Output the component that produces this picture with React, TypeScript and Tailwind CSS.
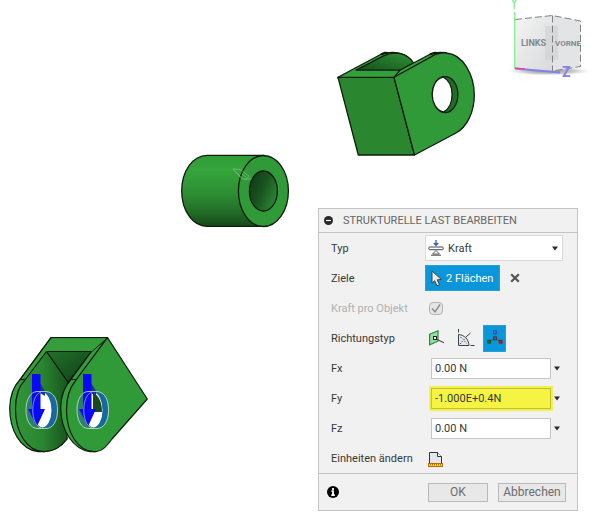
import { useState } from "react";
import type { ReactNode } from "react";

const Caret = () => (
  <svg width="6" height="5" viewBox="0 0 6 5" aria-hidden="true">
    <path d="M0 0.5H6L3 4.5Z" fill="#2b2b2b" />
  </svg>
);

const Row = ({
  label,
  htmlFor,
  muted,
  children
}: {
  label: string;
  htmlFor?: string;
  muted?: boolean;
  children: ReactNode;
}) => (
  <div className="flex h-[30px] items-center">
    <label
      htmlFor={htmlFor}
      className={
        muted
          ? "w-[94px] shrink-0 pt-0.5 text-[#b0b0b0]"
          : "w-[94px] shrink-0 pt-0.5"
      }
    >
      {label}
    </label>
    {children}
  </div>
);

const ForceField = ({
  id,
  label,
  initial,
  highlight
}: {
  id: string;
  label: string;
  initial: string;
  highlight?: boolean;
}) => {
  const [value, setValue] = useState(initial);

  return (
    <Row label={label} htmlFor={id}>
      <div className="flex flex-1 items-center gap-0.5 pl-[6px] pr-4">
        <input
          id={id}
          type="text"
          value={value}
          onChange={(e) => setValue(e.target.value)}
          className={
            highlight
              ? "h-[21px] w-0 flex-1 border border-[#c2bd3a] bg-[#f5f443] px-[3px] outline-2 outline-[#f3f04a]"
              : "h-[21px] w-0 flex-1 border border-[#c6c6c6] bg-white px-[3px] outline-none"
          }
        />
        <button type="button" aria-label={`${label} Optionen`} className="p-px">
          <Caret />
        </button>
      </div>
    </Row>
  );
};

const ForceIcon = () => (
  <svg width="16" height="16" viewBox="0 0 16 16" fill="none">
    <path d="M8 0V4.5M5.8 3L8 5.3L10.2 3" stroke="#3157b5" strokeWidth="1.3" />
    <rect x="0.8" y="7" width="14.4" height="2.7" rx="0.8" fill="#fff" stroke="#454950" />
    <path d="M8 10.5L4.6 14H11.4Z" fill="#fff" stroke="#454950" strokeWidth="0.9" />
    <path d="M3 15.2H13" stroke="#454950" />
  </svg>
);

const CursorIcon = () => (
  <svg width="12" height="17" viewBox="0 0 12 17">
    <path
      d="M1 1V13.2L3.7 10.7L6 15.8L8.5 14.7L6.2 9.8L10.4 9.5Z"
      fill="#e9edf0"
      stroke="#39424a"
      strokeWidth="1"
    />
  </svg>
);

const NormalIcon = () => (
  <svg width="18" height="16" viewBox="0 0 18 16">
    <path d="M1.6 4.3L10 0.8V11.2L1.6 14.8Z" fill="#98dda3" stroke="#288b3b" strokeWidth="1.2" />
    <path d="M7 8.4L16 12.8" stroke="#713d49" strokeWidth="1.1" />
    <rect x="5.5" y="6.5" width="3" height="3" fill="#fff" stroke="#222" />
  </svg>
);

const AngleIcon = () => (
  <svg width="18" height="18" viewBox="0 0 18 18" fill="none" stroke="#3c4147">
    <path d="M1.5 0V3.5M13.5 16.5H17.5" />
    <path d="M1.5 5.5C7.5 6 11.8 10.3 12 16.5H1.5Z" fill="#e3e7eb" />
    <path d="M9 8L13.5 4" />
    <path d="M3 15L8 9.5M3.5 8L6 10.5M7.5 12L9.5 14.5" strokeDasharray="1.4 1.3" strokeWidth="0.9" />
  </svg>
);

const VectorIcon = () => (
  <svg width="16" height="16" viewBox="0 0 16 16">
    <path d="M8 3V8" stroke="#2854a5" strokeDasharray="1.5 1" />
    <path d="M8 8.5L3 11" stroke="#29572d" strokeDasharray="2 0.8" />
    <path d="M8 8.5L13 11" stroke="#782a32" strokeDasharray="2 0.8" />
    <rect x="6.6" y="0.8" width="2.8" height="2.8" fill="#2586cf" stroke="#28539b" />
    <rect x="6.6" y="7" width="2.8" height="2.8" fill="#47728a" stroke="#44333b" />
    <rect x="0.8" y="10.3" width="2.8" height="2.8" fill="#137529" stroke="#125a22" />
    <rect x="12.2" y="10.3" width="2.8" height="2.8" fill="#bd1625" stroke="#941521" />
  </svg>
);

const UnitsIcon = () => (
  <svg width="16" height="17" viewBox="0 0 16 17">
    <path d="M1.5 12.5V1.5H9.5L13.5 5.5V12.5" fill="#e5e7ef" stroke="#30343a" />
    <path d="M9.5 1.5V5.5H13.5" fill="#fff" stroke="#30343a" />
    <rect x="0.5" y="12.5" width="14" height="3" fill="#ffe21c" stroke="#bb6b00" />
    <path d="M2.5 13V14.5M4.5 13V14.5M6.5 13V14.5M8.5 13V14.5M10.5 13V14.5M12.5 13V14.5" stroke="#b77300" />
  </svg>
);

const UpperClevis = () => (
  <svg
    className="absolute left-[330px] top-[45px]"
    width="150"
    height="115"
    viewBox="330 45 150 115"
    stroke="#101c10"
    strokeWidth="1.3"
    strokeLinejoin="round"
  >
    <defs>
      <linearGradient id="clevisInner" x1="0" y1="1" x2="1" y2="0">
        <stop offset="0" stopColor="#14501a" />
        <stop offset="1" stopColor="#2f9237" />
      </linearGradient>
    </defs>
    <path d="M338 77.3L381 54.2C393 50.5 406 52 413.5 63L400 78H338Z" fill="#34a03c" />
    <path d="M356 70.2L384 55.6C395 51 407 52.5 413.5 63L400 70.2Z" fill="url(#clevisInner)" />
    <path d="M381 54.2L385 52.7L388 53" fill="none" strokeWidth="2" />
    <path d="M394 77.3L400 70.2L430 54.2C436 51.6 441 52 446 52.7L433 57Z" fill="#36a43e" />
    <path d="M338 77.3H394L414.5 155H358.3Z" fill="#2b8630" />
    <path
      d="M394 77.3L431.5 56.6C436 53.5 441 52.8 446 53C463 54 474.3 75 474.3 95C474.3 112 467 127 456 133L414.5 155Z"
      fill="#309a38"
    />
    <path d="M430 54.2L435 52.7L439 53.2" fill="none" strokeWidth="2" />
    <ellipse cx="445.2" cy="94.6" rx="12.7" ry="18" fill="#1f6e27" />
    <path d="M443 77C429 80 428 108 443.5 112C455 106 455 83 443 77Z" fill="#fff" />
  </svg>
);

const Sleeve = () => (
  <svg
    className="absolute left-[176px] top-[150px]"
    width="118"
    height="82"
    viewBox="176 150 118 82"
    stroke="#101c10"
    strokeWidth="1.3"
  >
    <defs>
      <linearGradient id="sleeveBody" x1="0" y1="0" x2="0" y2="1">
        <stop offset="0" stopColor="#309b36" />
        <stop offset="0.2" stopColor="#35a53c" />
        <stop offset="0.55" stopColor="#2d8d33" />
        <stop offset="0.8" stopColor="#226c27" />
        <stop offset="1" stopColor="#15481a" />
      </linearGradient>
      <linearGradient id="sleeveBore" x1="0" y1="0.2" x2="1" y2="0.8">
        <stop offset="0" stopColor="#113916" />
        <stop offset="0.45" stopColor="#195421" />
        <stop offset="1" stopColor="#2f8a36" />
      </linearGradient>
    </defs>
    <path
      d="M263.5 155.4H207C193 155.4 181.7 171 181.7 191C181.7 211 193 226.4 207 226.4H263.5Z"
      fill="url(#sleeveBody)"
    />
    <ellipse cx="263.4" cy="191" rx="25" ry="35.5" fill="#309a38" />
    <ellipse cx="263.4" cy="191" rx="14" ry="20" fill="url(#sleeveBore)" />
    <g fill="none" stroke="#a9d9ac" strokeWidth="1" opacity="0.45">
      <path d="M233 169L240 169.5L249 176L246 180L240 177Z" />
      <path d="M236 172L243 179L252 179M242 174L246 177" />
    </g>
  </svg>
);

// Bore with the load arrow that acts on its face
const LoadedHole = () => (
  <>
    <path d="M37 392H46C54 392 57 400 57 410C57 421 53 428 46 428H37C30 428 26.5 420 26.5 410C26.5 400 30 392 37 392Z" fill="#2b806b" stroke="none" />
    <path d="M44 392C54 391 57 400 57 410C57 421 53 428 44 428Z" fill="#1668a0" stroke="none" />
    <ellipse cx="42.5" cy="410" rx="9" ry="17.5" fill="#fff" stroke="none" />
  </>
);

const LoadArrow = () => (
  <>
    <path d="M40 383L45 391V396L40 393Z" fill="#1b348e" stroke="none" />
    <path d="M32 374H40.5V409H45L37 426.5L28 409H32Z" fill="#0908fa" stroke="none" />
    <g fill="none" stroke="#c7e3d8" strokeWidth="1">
      <path d="M37 391.5H46C54 392 57.5 400 57.5 410C57.5 421 53 428.5 46 428.5H37C30 428 26 420 26 410C26 400 30 392 37 391.5Z" opacity="0.8" />
      <path d="M41 392C30 395 30 425 41 428" opacity="0.6" />
    </g>
  </>
);

const LowerClevis = () => (
  <svg
    className="absolute left-[4px] top-[332px]"
    width="150"
    height="125"
    viewBox="4 332 150 125"
    stroke="#101c10"
    strokeWidth="1.2"
    strokeLinejoin="round"
  >
    <defs>
      <linearGradient id="lowerInner" x1="0" y1="0" x2="1" y2="0">
        <stop offset="0" stopColor="#309638" />
        <stop offset="0.5" stopColor="#2a8631" />
        <stop offset="1" stopColor="#17551e" />
      </linearGradient>
      <linearGradient id="lowerPocket" x1="0" y1="0" x2="1" y2="1">
        <stop offset="0" stopColor="#237029" />
        <stop offset="1" stopColor="#10401a" />
      </linearGradient>
    </defs>
    <path
      d="M51 337.7H107.5L75 380C65 392 66 436 67 439C60 448 53 451.7 44 451.7H38C20 449 9.7 430 9.7 408C10 395 14 386 20 379.5Z"
      fill="#339e3b"
    />
    <path
      d="M46.5 351.5L68 382L67 439C61 447 53 451.7 44 451.7C27 451 15.5 433 15.5 409C15.5 396 19 386 25 380Z"
      fill="url(#lowerInner)"
    />
    <path d="M46.5 351.5H91.5L68 382Z" fill="url(#lowerPocket)" />
    <path d="M20 379.5H25" />
    <path
      d="M107.5 337.7L91.5 351.5L71 379.5C64 387 60.7 397 60.7 408C61 431 73 449 90 451.7H96L76 380Z"
      fill="#339e3b"
    />
    <path
      d="M107.5 337.7L147.3 399L112 439C106 447 102 451.7 94 451.7C78 451 66.5 433 66.5 410C66.5 397 70 387 76 380Z"
      fill="#309a38"
    />
    <path d="M51.6 338.4H106L91.5 351.5H46.5L41 351.5Z" fill="#339e3b" stroke="none" />
    <path d="M46.5 351.5H91.5M71 379.5H76M51 337.7L20 379.5" fill="none" />
    <LoadedHole />
    <LoadArrow />
    <g transform="translate(51 0)">
      <LoadedHole />
      <path d="M42 393C48 395 51 403 51 412H42Z" fill="#17481e" stroke="none" />
      <LoadArrow />
    </g>
  </svg>
);

const ViewCube = () => (
  <svg
    className="absolute right-0 top-0"
    width="95"
    height="85"
    viewBox="500 0 95 85"
  >
    <defs>
      <linearGradient id="cubeLeft" x1="0" y1="0" x2="1" y2="1">
        <stop offset="0" stopColor="#f4f4f4" />
        <stop offset="1" stopColor="#d9dadb" />
      </linearGradient>
      <radialGradient id="cubeShadow">
        <stop offset="0" stopColor="#8d8d8d" />
        <stop offset="0.6" stopColor="#cfcfcf" />
        <stop offset="1" stopColor="#fff" stopOpacity="0" />
      </radialGradient>
    </defs>
    <ellipse cx="549" cy="71" rx="45" ry="5" fill="url(#cubeShadow)" />
    <path d="M515 19.5L552.5 15.5V71L515 69Z" fill="url(#cubeLeft)" />
    <path d="M552.5 15.5L580.5 21V66.5L552.5 71Z" fill="#e3e4e5" />
    <path d="M545 26H558V60H545Z" fill="#cdd0d3" opacity="0.6" />
    <g fill="none" stroke="#818181" strokeDasharray="7 3">
      <path d="M515 19.5L552.5 15.5L580.5 21V66.5L552.5 71" />
      <path d="M552.5 15.5V71" />
    </g>
    <path d="M514.7 12V69" stroke="#8af394" strokeWidth="1.5" />
    <path d="M511.5 -2L514.3 3.5L517 -2M514.3 3.5V9" fill="none" stroke="#8af394" strokeWidth="1.5" />
    <path d="M515 68.5L560 72.5" stroke="#8282eb" strokeWidth="2" />
    <path d="M515 68.3L525 69" stroke="#d84ba0" strokeWidth="1.5" />
    <text x="521" y="46" fontSize="9" fontWeight="700" fill="#83888e">LINKS</text>
    <text x="555" y="46" fontSize="8" fontWeight="700" fill="#83888e">VORNE</text>
    <text x="562" y="77" fontSize="14" fontWeight="700" fill="#8282eb">Z</text>
  </svg>
);

const LoadDialog = () => {
  const [direction, setDirection] = useState("vector");
  const modes = [
    { id: "normal", title: "Normal", icon: <NormalIcon /> },
    { id: "angle", title: "Winkel", icon: <AngleIcon /> },
    { id: "vector", title: "Vektoren", icon: <VectorIcon /> }
  ];

  return (
    <section
      aria-labelledby="dialog-title"
      className="absolute right-[17px] top-[208px] w-[260px] border border-[#c4c4c4] bg-[#f1f1f1] text-[11px] text-[#383838]"
    >
      <header className="flex h-6 items-center gap-[10px] border-b border-[#c4c4c4] pl-[5px] text-[#666]">
        <button type="button" aria-label="Einklappen">
          <svg width="9" height="9" viewBox="0 0 9 9">
            <circle cx="4.5" cy="4.5" r="4.5" fill="#292929" />
            <path d="M2 4.5H7" stroke="#fff" strokeWidth="1.2" />
          </svg>
        </button>
        <h1 id="dialog-title" className="pt-0.5">STRUKTURELLE LAST BEARBEITEN</h1>
      </header>

      <form id="load-form" className="pl-3" onSubmit={(e) => e.preventDefault()}>
        <Row label="Typ" htmlFor="type">
          <div className="relative mr-[14px] flex-1">
            <select
              id="type"
              className="h-[26px] w-full appearance-none border border-[#d9d9d9] bg-white pl-[22px] pt-0.5 outline-none"
            >
              <option>Kraft</option>
            </select>
            <span className="pointer-events-none absolute inset-0 flex items-center justify-between pl-[3px] pr-[5px]">
              <ForceIcon />
              <Caret />
            </span>
          </div>
        </Row>

        <Row label="Ziele" htmlFor="targets">
          <button
            id="targets"
            type="button"
            className="flex h-[26px] w-[75px] items-center gap-[3px] whitespace-nowrap border border-[#269fe0] bg-[#0b96da] pl-[5px] text-white"
          >
            <CursorIcon />
            <span className="pt-0.5">2 Flächen</span>
          </button>
          <button type="button" aria-label="Auswahl löschen" className="ml-[10px]">
            <svg width="10" height="10" viewBox="0 0 10 10">
              <path d="M1.2 1.2L8.8 8.8M8.8 1.2L1.2 8.8" stroke="#555" strokeWidth="2.2" />
            </svg>
          </button>
        </Row>

        <Row label="Kraft pro Objekt" htmlFor="per-object" muted>
          <span className="relative ml-1 flex">
            <input
              id="per-object"
              type="checkbox"
              defaultChecked
              disabled
              className="h-[13px] w-[14px] appearance-none rounded-sm border border-[#b5b5b5] bg-[#e5e5e5]"
            />
            <svg className="pointer-events-none absolute inset-0" width="14" height="13" viewBox="0 0 14 13">
              <path d="M3 6.5L6 9.8L11 2.5" fill="none" stroke="#8b8b8b" strokeWidth="1.4" />
            </svg>
          </span>
        </Row>

        <Row label="Richtungstyp">
          <div role="group" aria-label="Richtungstyp" className="flex gap-[5px]">
            {modes.map((mode) => (
              <button
                key={mode.id}
                type="button"
                title={mode.title}
                aria-pressed={direction === mode.id}
                onClick={() => setDirection(mode.id)}
                className={
                  direction === mode.id
                    ? "flex h-[27px] w-[23px] items-center justify-center border border-[#269fe0] bg-[#0b96da]"
                    : "flex h-[27px] w-6 items-center justify-center"
                }
              >
                {mode.icon}
              </button>
            ))}
          </div>
        </Row>

        <ForceField id="fx" label="Fx" initial="0.00 N" />
        <ForceField id="fy" label="Fy" initial="-1.000E+0.4N" highlight />
        <ForceField id="fz" label="Fz" initial="0.00 N" />

        <Row label="Einheiten ändern" htmlFor="units">
          <button id="units" type="button" className="pl-[3px] pt-0.5">
            <UnitsIcon />
          </button>
        </Row>
      </form>

      <footer className="flex h-[37px] items-center border-t border-[#c4c4c4] pl-2 pr-[11px] text-xs text-[#6c6c6c]">
        <button type="button" aria-label="Info" className="mr-auto">
          <svg width="12" height="12" viewBox="0 0 12 12">
            <circle cx="6" cy="6" r="6" fill="#000" />
            <path d="M6 2V4M4.5 5.2H6V9M4.3 9.2H7.8" fill="none" stroke="#fff" strokeWidth="1.8" />
          </svg>
        </button>
        <div className="flex gap-[10px]">
          <button type="submit" form="load-form" className="h-[19px] w-[60px] border border-[#b9b9b9] bg-[#e8e8e8] leading-none">
            OK
          </button>
          <button type="button" className="h-[19px] w-[68px] border border-[#b9b9b9] bg-[#e8e8e8] leading-none">
            Abbrechen
          </button>
        </div>
      </footer>
    </section>
  );
};

export default function App() {
  return (
    <main className="relative min-h-screen overflow-hidden bg-white font-[Roboto,'Liberation_Sans',sans-serif]">
      <UpperClevis />
      <Sleeve />
      <LowerClevis />
      <ViewCube />
      <LoadDialog />
    </main>
  );
}
